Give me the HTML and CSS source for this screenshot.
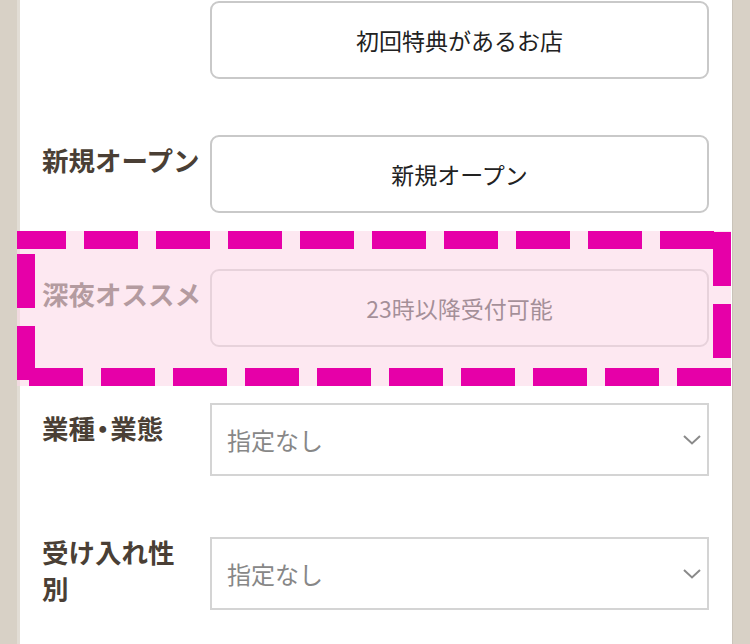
FILE: index.html
```html
<!DOCTYPE html>
<html lang="ja">
<head>
<meta charset="utf-8">
<title>検索条件</title>
<link rel="stylesheet" href="styles.css">
</head>
<body>
<div class="panel">
  <div class="row">
    <div class="label"></div>
    <div class="btn">初回特典があるお店</div>
  </div>
  <div class="row">
    <div class="label">新規オープン</div>
    <div class="btn">新規オープン</div>
  </div>
  <div class="row row--highlight">
    <div class="label">深夜オススメ</div>
    <div class="btn">23時以降受付可能</div>
    <div class="highlight">
      <svg class="highlight__dash" width="714" height="155" viewBox="0 0 714 155">
        <line x1="-5" y1="9" x2="697" y2="9"/>
        <line x1="705" y1="1" x2="705" y2="127"/>
        <line x1="12" y1="146" x2="714" y2="146"/>
        <line x1="9" y1="23" x2="9" y2="149"/>
      </svg>
    </div>
  </div>
  <div class="row">
    <div class="label">業種<span class="label__dot">・</span>業態</div>
    <div class="select">
      <span>指定なし</span>
      <svg class="chevron" width="18" height="10" viewBox="0 0 18 10"><path d="M1 1 L9 8.5 L17 1"/></svg>
    </div>
  </div>
  <div class="row">
    <div class="label label--multi">受け入れ性<br>別</div>
    <div class="select">
      <span>指定なし</span>
      <svg class="chevron" width="18" height="10" viewBox="0 0 18 10"><path d="M1 1 L9 8.5 L17 1"/></svg>
    </div>
  </div>
</div>
</body>
</html>
```

FILE: styles.css
```css
html, body {
  margin: 0;
  padding: 0;
  height: 100%;
  overflow: hidden;
}

body {
  background: #d8d1c6;
  font-family: "Noto Sans CJK JP", "Noto Sans", sans-serif;
}

.panel {
  box-sizing: border-box;
  margin-left: 17px;
  width: 715px;
  min-height: 100vh;
  background: #ffffff;
  border-left: 3px solid #e2ddd5;
  box-shadow: 1px 0 0 #c9c3b9;
  padding: 1px 23px 0 22px;
}

.row {
  position: relative;
  display: flex;
  align-items: flex-start;
  min-height: 78px;
  margin-bottom: 56px;
}

.label {
  flex: 0 0 168px;
  box-sizing: border-box;
  padding-top: 7px;
  font-size: 26.5px;
  line-height: 36px;
  font-weight: 700;
  color: #4a3f35;
  white-space: nowrap;
}

.label__dot {
  font-feature-settings: "palt" 1;
  padding: 0 1px;
}

.label--multi {
  padding-top: 0;
  margin-top: -3px;
}

.btn {
  flex: 1;
  box-sizing: border-box;
  height: 78px;
  border: 2px solid #c9c9c9;
  border-radius: 9px;
  background: #ffffff;
  display: flex;
  align-items: center;
  justify-content: center;
  font-size: 23px;
  color: #222222;
}

.select {
  flex: 1;
  box-sizing: border-box;
  height: 73px;
  border: 2px solid #d4d4d4;
  background: #ffffff;
  display: flex;
  align-items: center;
  justify-content: space-between;
  padding: 0 6px 0 15px;
  font-size: 24px;
  color: #878787;
}

.chevron {
  display: block;
}

.chevron path {
  fill: none;
  stroke: #8a8a8a;
  stroke-width: 2;
}

.highlight {
  position: absolute;
  top: -38px;
  left: -25px;
  width: 714px;
  height: 155px;
  background: rgba(252, 216, 232, 0.6);
  pointer-events: none;
}

.highlight__dash {
  display: block;
  overflow: hidden;
}

.highlight__dash line {
  stroke: #e600a8;
  stroke-width: 18;
  stroke-dasharray: 54 18;
}
```
